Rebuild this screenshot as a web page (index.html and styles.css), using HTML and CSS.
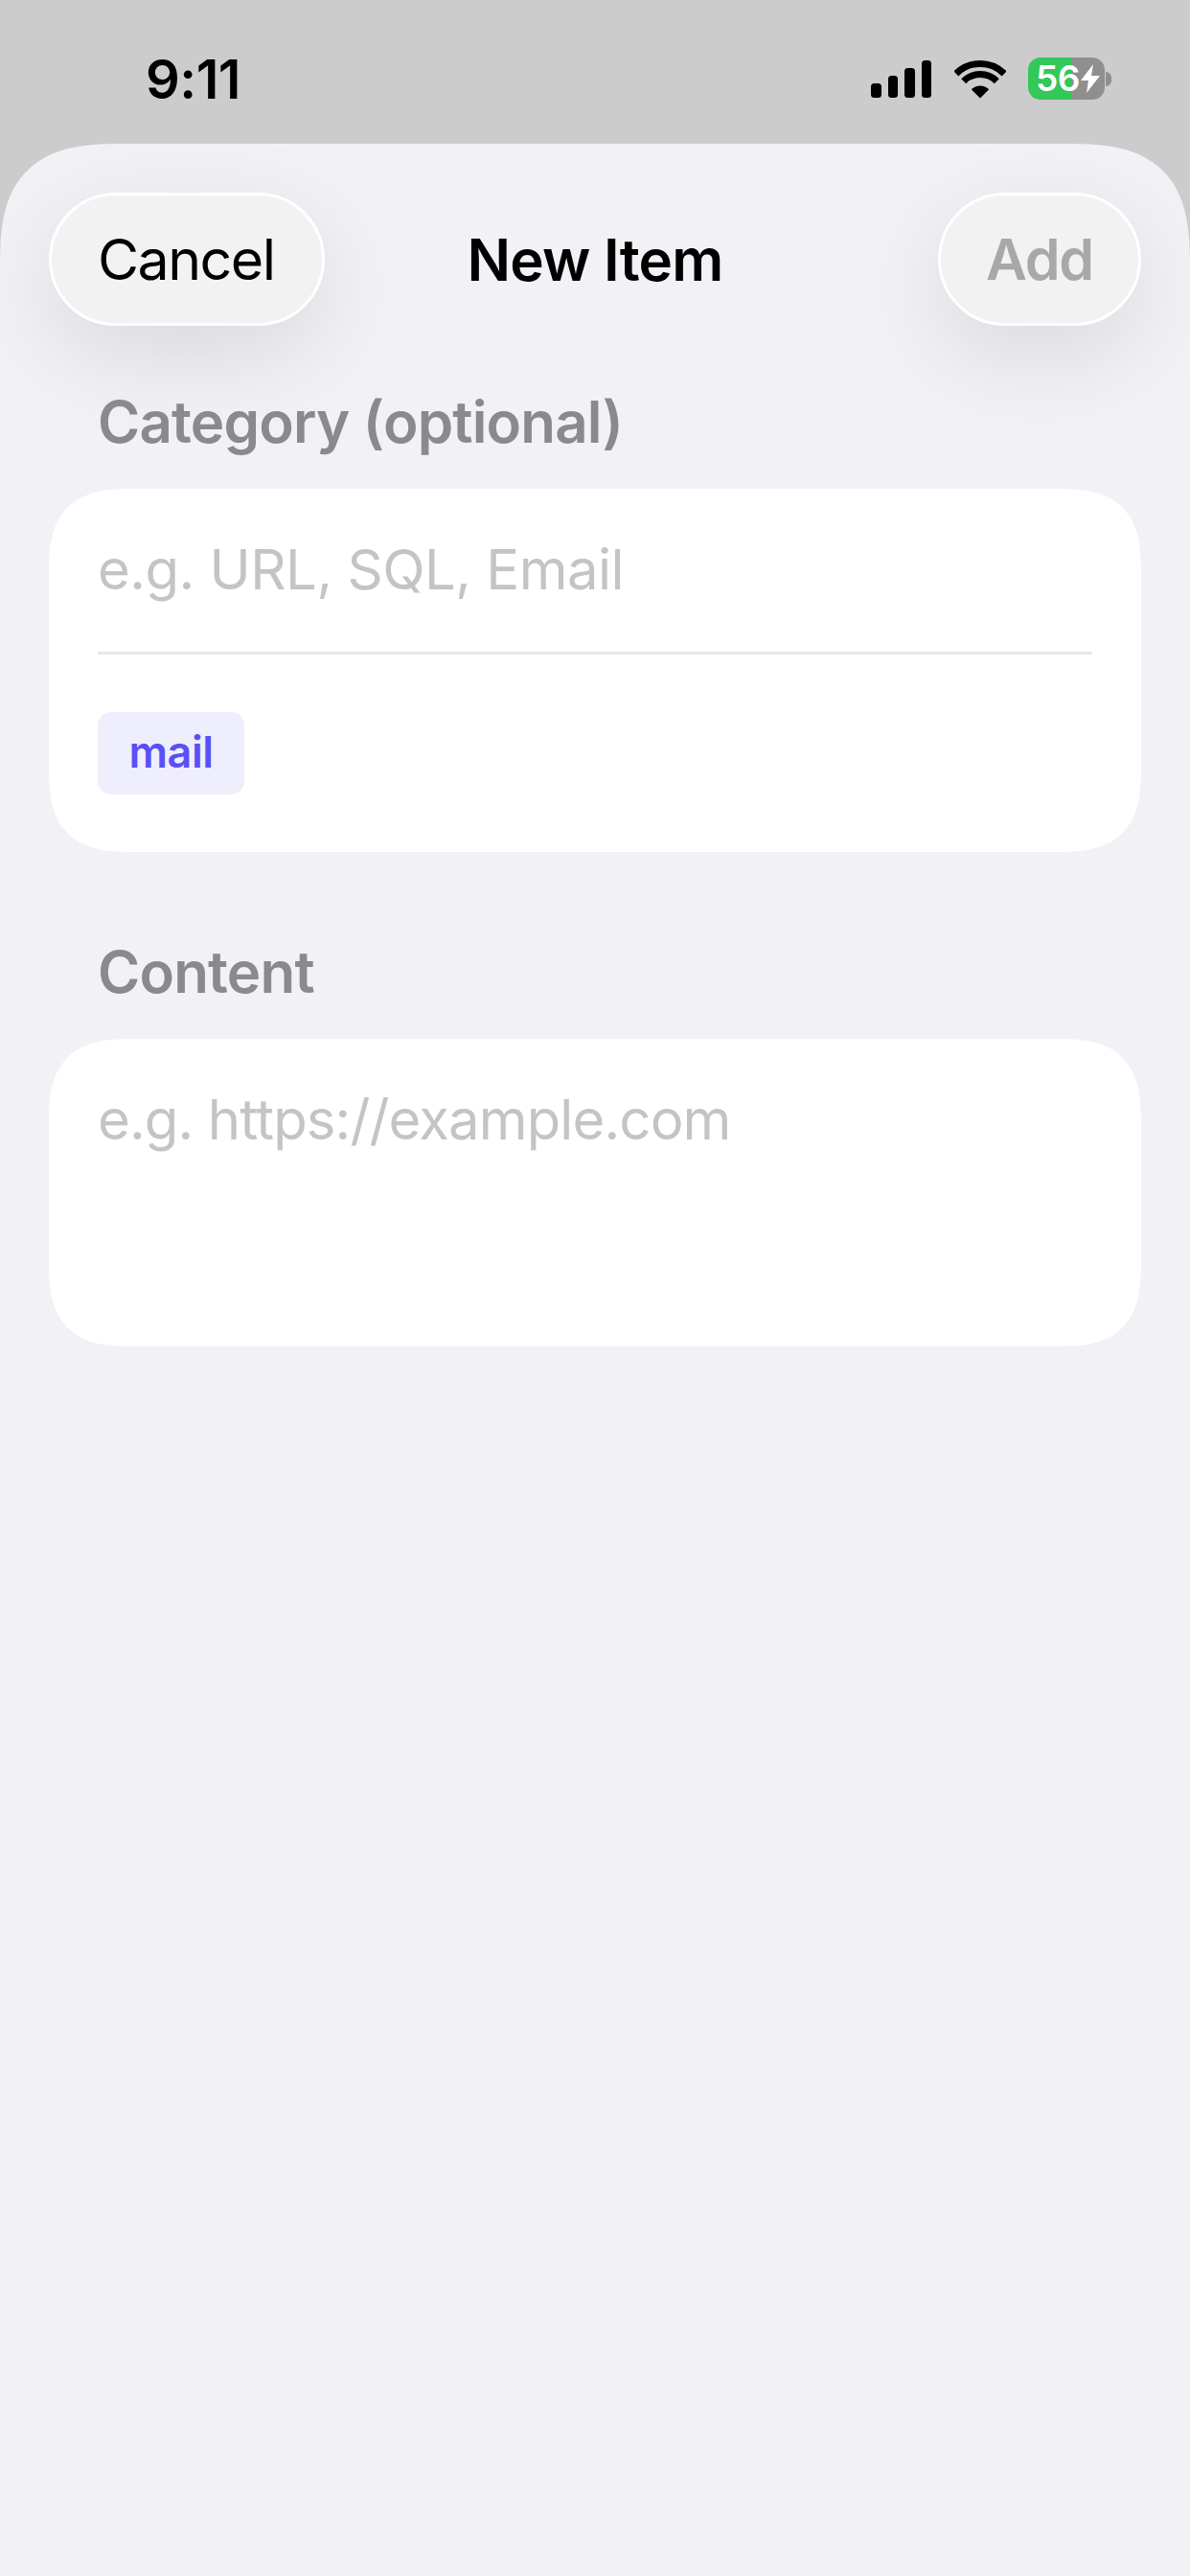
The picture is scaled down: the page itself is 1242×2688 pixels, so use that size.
FILE: index.html
```html
<!DOCTYPE html>
<html lang="en">
<head>
<meta charset="utf-8">
<title>New Item</title>
<link rel="stylesheet" href="styles.css">
</head>
<body>
<div class="screen">
  <header class="status">
    <span class="time">9:11</span>
    <div class="status-icons">
      <div class="signal">
        <i class="bar b1"></i><i class="bar b2"></i><i class="bar b3"></i><i class="bar b4"></i>
      </div>
      <svg class="wifi" viewBox="0 0 54 40" width="54" height="40">
        <path d="M1.9 13.9A35.5 35.5 0 0 1 52.1 13.9" fill="none" stroke="#000" stroke-width="7"/>
        <path d="M9.7 21.7A24.5 24.5 0 0 1 44.3 21.7" fill="none" stroke="#000" stroke-width="7"/>
        <path d="M27 39.5L17.8 30.3A13 13 0 0 1 36.2 30.3Z" fill="#000"/>
      </svg>
      <div class="battery">
        <div class="battery-body">
          <span class="battery-num">56</span>
          <svg class="bolt" viewBox="0 0 20 30" width="20" height="30">
            <path d="M13 0L0 17H8L6 30L20 12H11Z" fill="#fff"/>
          </svg>
        </div>
        <i class="battery-cap"></i>
      </div>
    </div>
  </header>
  <main class="sheet">
    <nav class="nav">
      <div class="nav-left"><button class="pill">Cancel</button></div>
      <h1 class="title">New Item</h1>
      <div class="nav-right"><button class="pill pill-disabled">Add</button></div>
    </nav>
    <section class="group group-first">
      <h2 class="label">Category (optional)</h2>
      <div class="card">
        <div class="field field-line">e.g. URL, SQL, Email</div>
        <div class="tags"><span class="tag">mail</span></div>
      </div>
    </section>
    <section class="group group-second">
      <h2 class="label">Content</h2>
      <div class="card card-content">
        <div class="field field-url">e.g. https://example.com</div>
      </div>
    </section>
  </main>
</div>
</body>
</html>
```
FILE: styles.css
```css
* { box-sizing: border-box; }
html, body { margin: 0; padding: 0; }
body { font-family: Inter, "Noto Sans", sans-serif; }
.screen {
  width: 1242px;
  height: 2688px;
  background: #cccccc;
  display: flex;
  flex-direction: column;
  overflow: hidden;
}
.status {
  height: 150px;
  flex: none;
  display: flex;
  justify-content: space-between;
  padding: 60px 82px 0 152px;
  align-items: flex-start;
}
.time {
  font-size: 56px;
  line-height: 46px;
  font-weight: 600;
  color: #000;
  letter-spacing: -0.5px;
}
.status-icons { display: flex; align-items: flex-start; }
.signal {
  display: flex;
  align-items: flex-end;
  gap: 7px;
  height: 39px;
  margin-top: 3px;
}
.bar { display: block; width: 10.5px; background: #000; border-radius: 3.5px; }
.b1 { height: 15px; }
.b2 { height: 23px; }
.b3 { height: 31px; }
.b4 { height: 39px; }
.wifi { display: block; margin: 3px 0 0 24px; }
.battery { display: flex; align-items: center; margin-left: 23px; height: 44px; }
.battery-body {
  width: 80px;
  height: 44px;
  border-radius: 13px;
  background: linear-gradient(90deg, #34c759 0 45px, #8f8f8f 45px 80px);
  display: flex;
  align-items: center;
  padding-left: 8px;
}
.battery-num { font-size: 37px; line-height: 44px; font-weight: 600; color: #fff; letter-spacing: -0.5px; }
.bolt { display: block; margin-left: 1px; }
.battery-cap { display: block; width: 6px; height: 15px; margin-left: 1px; background: #8f8f8f; border-radius: 0 7px 7px 0; }
.sheet {
  flex: 1;
  background: #f1f1f6;
  border-radius: 130px 130px 0 0;
  corner-shape: superellipse(1.5);
  overflow: hidden;
  padding: 51px 51px 0;
}
.nav {
  display: grid;
  grid-template-columns: 1fr auto 1fr;
  align-items: center;
  height: 139px;
}
.nav-right { display: flex; justify-content: flex-end; }
.pill {
  height: 139px;
  padding: 0 50px 0 48px;
  border: 3px solid #fff;
  border-radius: 70px;
  background: #f2f2f3;
  font-family: inherit;
  font-size: 59px;
  font-weight: 400;
  letter-spacing: -1.5px;
  color: #000;
  box-shadow: 0 30px 100px rgba(0, 0, 0, 0.1);
}
.pill-disabled { color: #a8a8a8; font-weight: 600; padding: 0 47px; letter-spacing: -1.2px; }
.title { margin: 0; font-size: 60px; font-weight: 600; letter-spacing: -0.8px; color: #000; }
.group-first { margin-top: 65px; }
.group-second { margin-top: 90px; }
.label {
  margin: 0 0 35px 51px;
  font-size: 60px;
  line-height: 70px;
  font-weight: 600;
  color: #8a8a8e;
  letter-spacing: -0.8px;
}
.card {
  background: #fff;
  border-radius: 90px;
  corner-shape: superellipse(1.5);
  padding: 49px 51px 60px;
}
.field {
  font-size: 58px;
  line-height: 70px;
  font-weight: 400;
  color: #c4c4c6;
  letter-spacing: -0.5px;
}
.field-url { letter-spacing: -0.85px; }
.field-line { padding-bottom: 50px; border-bottom: 3px solid #e8e8ea; margin-bottom: 60px; height: 124px; }
.tags { display: flex; }
.tag {
  height: 86px;
  width: 153px;
  border-radius: 14px;
  background: #efeefd;
  color: #5a50f5;
  font-size: 45px;
  font-weight: 600;
  line-height: 84px;
  text-align: center;
  letter-spacing: -0.5px;
}
.card-content { height: 321px; }
```
